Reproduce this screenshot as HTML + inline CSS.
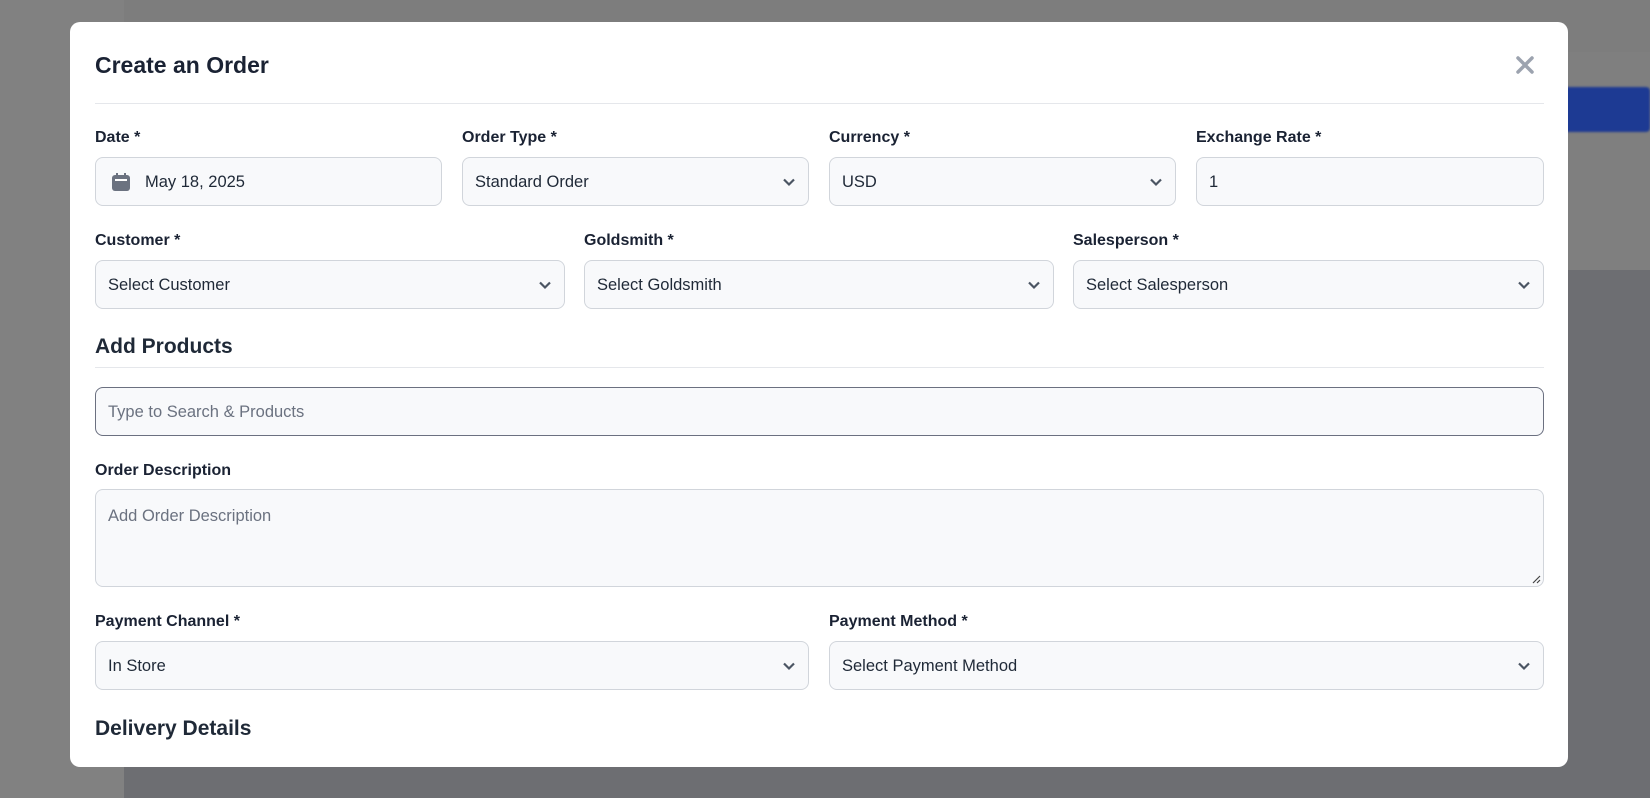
<!DOCTYPE html>
<html><head><meta charset="utf-8"><style>
*{box-sizing:border-box;margin:0;padding:0}
body{width:1650px;height:798px;overflow:hidden;background:#7f7f7f;font-family:"Liberation Sans",sans-serif;position:relative}
.bgbot{position:absolute;left:124px;top:270px;right:0;bottom:0;background:#6d6e72}
.side{position:absolute;left:0;top:0;width:124px;height:798px;background:#818181}
.topbar{position:absolute;left:124px;top:0;right:0;height:52px;background:#7d7d7d}
.blue{position:absolute;left:1555px;top:87px;width:95px;height:45px;background:#1d3a93;border-radius:4px;filter:blur(1px)}
.modal{position:absolute;left:70px;top:22px;width:1498px;height:745px;background:#fff;border-radius:10px}
.a{position:absolute}
h1{position:absolute;left:95px;top:52px;font-size:23px;font-weight:600;color:#1a2233}
h2{position:absolute;font-size:21px;font-weight:600;color:#1f2937}
.hr{position:absolute;left:95px;width:1449px;height:1px;background:#e5e7eb}
.lab{position:absolute;font-size:16px;font-weight:600;color:#1a2233}
.in{position:absolute;height:49px;background:#f8f9fb;border:1px solid #d1d5db;border-radius:8px;font-size:16.5px;color:#1f2937;padding-left:12px;line-height:49px}
.ph{color:#6b7280}
.chev{position:absolute;right:12px;top:17px}
</style></head><body>
<div class="side"></div><div class="topbar"></div><div class="bgbot"></div><div class="blue"></div>
<div class="modal"></div>
<h1>Create an Order</h1>
<svg class="a" style="left:1515px;top:55px" width="20" height="20" viewBox="0 0 20 20"><path d="M3 3L17 17M17 3L3 17" stroke="#9ca3af" stroke-width="3.5" stroke-linecap="round"/></svg>
<div class="hr" style="top:103px"></div>

<div class="lab" style="left:95px;top:129px">Date *</div>
<div class="lab" style="left:462px;top:129px">Order Type *</div>
<div class="lab" style="left:829px;top:129px">Currency *</div>
<div class="lab" style="left:1196px;top:129px">Exchange Rate *</div>
<div class="in" style="left:95px;top:157px;width:347px;padding-left:49px">May 18, 2025
<svg class="a" style="left:15px;top:14px" width="20" height="20" viewBox="0 0 20 20"><rect x="1" y="3" width="18" height="16" rx="3" fill="#6b7280"/><rect x="5" y="1" width="2" height="4" fill="#6b7280"/><rect x="13" y="1" width="2" height="4" fill="#6b7280"/><rect x="4" y="7" width="12" height="2" fill="#fff"/></svg></div>
<div class="in" style="left:462px;top:157px;width:347px">Standard Order<svg class="chev" width="14" height="14" viewBox="0 0 14 14"><path d="M2 4.5L7 9.5L12 4.5" stroke="#4b5563" stroke-width="2.2" fill="none"/></svg></div>
<div class="in" style="left:829px;top:157px;width:347px">USD<svg class="chev" width="14" height="14" viewBox="0 0 14 14"><path d="M2 4.5L7 9.5L12 4.5" stroke="#4b5563" stroke-width="2.2" fill="none"/></svg></div>
<div class="in" style="left:1196px;top:157px;width:348px">1</div>

<div class="lab" style="left:95px;top:232px">Customer *</div>
<div class="lab" style="left:584px;top:232px">Goldsmith *</div>
<div class="lab" style="left:1073px;top:232px">Salesperson *</div>
<div class="in" style="left:95px;top:260px;width:470px">Select Customer<svg class="chev" width="14" height="14" viewBox="0 0 14 14"><path d="M2 4.5L7 9.5L12 4.5" stroke="#4b5563" stroke-width="2.2" fill="none"/></svg></div>
<div class="in" style="left:584px;top:260px;width:470px">Select Goldsmith<svg class="chev" width="14" height="14" viewBox="0 0 14 14"><path d="M2 4.5L7 9.5L12 4.5" stroke="#4b5563" stroke-width="2.2" fill="none"/></svg></div>
<div class="in" style="left:1073px;top:260px;width:471px">Select Salesperson<svg class="chev" width="14" height="14" viewBox="0 0 14 14"><path d="M2 4.5L7 9.5L12 4.5" stroke="#4b5563" stroke-width="2.2" fill="none"/></svg></div>

<h2 style="left:95px;top:335px">Add Products</h2>
<div class="hr" style="top:367px"></div>
<div class="in ph" style="left:95px;top:387px;width:1449px;border-color:#6b7080">Type to Search &amp; Products</div>

<div class="lab" style="left:95px;top:462px">Order Description</div>
<div class="in ph" style="left:95px;top:489px;width:1449px;height:98px;line-height:1;padding-top:18px">Add Order Description
<svg class="a" style="right:2px;bottom:2px" width="10" height="10" viewBox="0 0 10 10"><path d="M9 2L2 9M9 6L6 9" stroke="#444" stroke-width="1.2"/></svg></div>

<div class="lab" style="left:95px;top:613px">Payment Channel *</div>
<div class="lab" style="left:829px;top:613px">Payment Method *</div>
<div class="in" style="left:95px;top:641px;width:714px">In Store<svg class="chev" width="14" height="14" viewBox="0 0 14 14"><path d="M2 4.5L7 9.5L12 4.5" stroke="#4b5563" stroke-width="2.2" fill="none"/></svg></div>
<div class="in" style="left:829px;top:641px;width:715px">Select Payment Method<svg class="chev" width="14" height="14" viewBox="0 0 14 14"><path d="M2 4.5L7 9.5L12 4.5" stroke="#4b5563" stroke-width="2.2" fill="none"/></svg></div>

<h2 style="left:95px;top:717px">Delivery Details</h2>
</body></html>
